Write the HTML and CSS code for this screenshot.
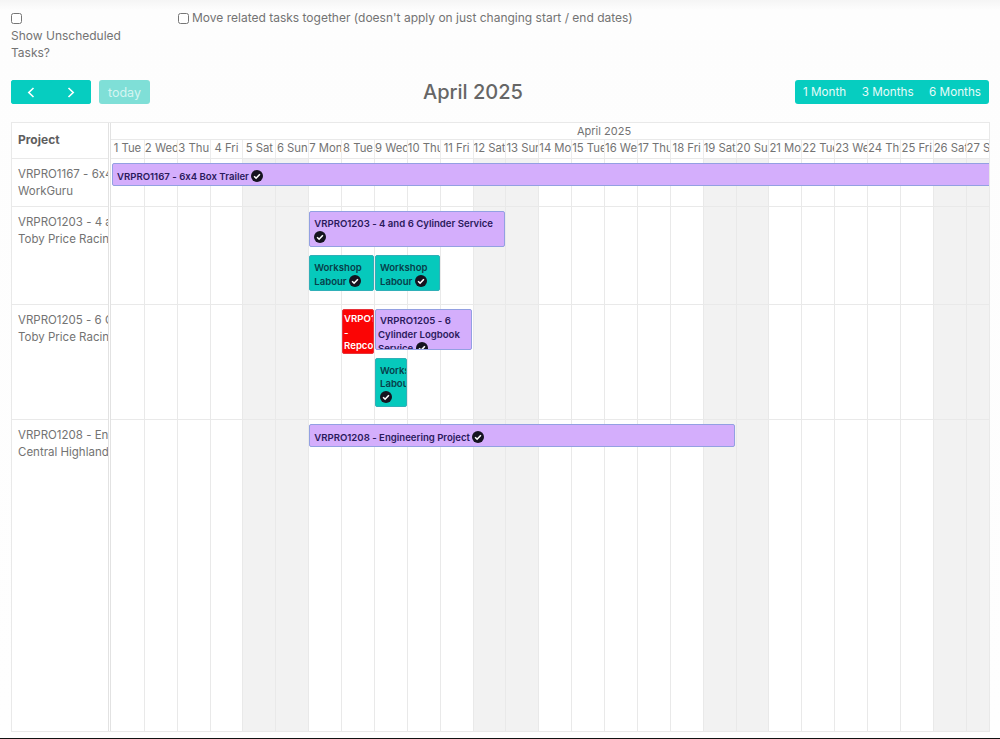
FILE: index.html
```html
<!DOCTYPE html>
<html lang="en">
<head>
<meta charset="utf-8">
<title>Project Schedule</title>
<link rel="stylesheet" href="styles.css">
</head>
<body>
<svg class="defs" width="0" height="0" aria-hidden="true">
  <symbol id="ok" viewBox="0 0 24 24">
    <circle cx="12" cy="12" r="12" fill="#15131f"/>
    <path d="M6.2 12.4l4 4 7.6-8" fill="none" stroke="#fff" stroke-width="3.2"/>
  </symbol>
</svg>
<main class="page">
  <section class="options">
    <div class="opt-unscheduled">
      <input type="checkbox" class="check">
      <label>Show Unscheduled Tasks?</label>
    </div>
    <div class="opt-move">
      <input type="checkbox" class="check">
      <label>Move related tasks together (doesn't apply on just changing start / end dates)</label>
    </div>
  </section>

  <section class="toolbar">
    <div class="tb-left">
      <div class="btn-group nav">
        <button class="btn">
          <svg width="8" height="11" viewBox="0 0 8 11"><path d="M6.5 1L1.8 5.5l4.7 4.5" fill="none" stroke="#fff" stroke-width="1.6"/></svg>
        </button>
        <button class="btn">
          <svg width="8" height="11" viewBox="0 0 8 11"><path d="M1.5 1l4.7 4.5L1.5 10" fill="none" stroke="#fff" stroke-width="1.6"/></svg>
        </button>
      </div>
      <button class="btn today">today</button>
    </div>
    <h1 class="title">April 2025</h1>
    <div class="btn-group views">
      <button class="btn">1 Month</button>
      <button class="btn">3 Months</button>
      <button class="btn">6 Months</button>
    </div>
  </section>

  <section class="sched">
    <div class="side">
      <div class="side-head">Project</div>
      <div class="side-row r1"><div>VRPRO1167 - 6x4 Box Trailer</div><div>WorkGuru</div></div>
      <div class="side-row r2"><div>VRPRO1203 - 4 and 6 Cylinder Service</div><div>Toby Price Racing</div></div>
      <div class="side-row r3"><div>VRPRO1205 - 6 Cylinder Logbook Service</div><div>Toby Price Racing</div></div>
      <div class="side-row r4"><div>VRPRO1208 - Engineering Project</div><div>Central Highlands</div></div>
    </div>
    <div class="scroller">
      <div class="timeline">
        <div class="month">April 2025</div>
        <div class="days">
          <div>1 Tue</div><div>2 Wed</div><div>3 Thu</div><div>4 Fri</div><div>5 Sat</div><div>6 Sun</div><div>7 Mon</div><div>8 Tue</div><div>9 Wed</div><div>10 Thu</div>
          <div>11 Fri</div><div>12 Sat</div><div>13 Sun</div><div>14 Mon</div><div>15 Tue</div><div>16 Wed</div><div>17 Thu</div><div>18 Fri</div><div>19 Sat</div><div>20 Sun</div>
          <div>21 Mon</div><div>22 Tue</div><div>23 Wed</div><div>24 Thu</div><div>25 Fri</div><div>26 Sat</div><div>27 Sun</div><div>28 Mon</div><div>29 Tue</div><div>30 Wed</div>
        </div>
        <div class="body">
          <div class="columns">
            <i></i><i></i><i></i><i></i><i class="we"></i><i class="we"></i><i></i><i></i><i></i><i></i>
            <i></i><i class="we"></i><i class="we"></i><i></i><i></i><i></i><i></i><i></i><i class="we"></i><i class="we"></i>
            <i></i><i></i><i></i><i></i><i></i><i class="we"></i><i class="we"></i><i></i><i></i><i></i>
          </div>
          <div class="lane r1">
            <div class="ev purple s1-30 h23">VRPRO1167 - 6x4 Box Trailer <svg class="ok"><use href="#ok"/></svg></div>
          </div>
          <div class="lane r2">
            <div class="ev purple s7-12 h36">VRPRO1203 - 4 and 6 Cylinder Service <svg class="ok"><use href="#ok"/></svg></div>
            <div class="ev teal s7-8 h36 row2">Workshop Labour <svg class="ok"><use href="#ok"/></svg></div>
            <div class="ev teal s9-10 h36 row2">Workshop Labour <svg class="ok"><use href="#ok"/></svg></div>
          </div>
          <div class="lane r3">
            <div class="ev red s8 h45">VRPO1205 - Repco Parts</div>
            <div class="ev purple s9-11 h41 indent">VRPRO1205 - 6 Cylinder Logbook Service <svg class="ok"><use href="#ok"/></svg></div>
            <div class="ev teal s9 h49 row2">Workshop Labour <svg class="ok"><use href="#ok"/></svg></div>
          </div>
          <div class="lane r4">
            <div class="ev purple s7-19 h23">VRPRO1208 - Engineering Project <svg class="ok"><use href="#ok"/></svg></div>
          </div>
        </div>
      </div>
    </div>
  </section>
</main>
<div class="edge"></div>
</body>
</html>
```
FILE: styles.css
```css
* { box-sizing: border-box; }
html, body { margin: 0; height: 739px; overflow: hidden; }
body {
  background: linear-gradient(#f5f5f5 0, #fdfdfd 10px, #fefefe 100%);
  font-family: Inter, "Liberation Sans", sans-serif;
  font-feature-settings: "calt" 0;
  font-size: 12px;
  color: #737373;
  display: flex;
  flex-direction: column;
}
.defs { position: absolute; }
.page { flex: 1; padding: 13px 10px 0 11px; display: flex; flex-direction: column; min-height: 0; }
.options { display: flex; height: 67px; }
.check { width: 11px; height: 11px; margin: 0; display: block; flex: none; }
.opt-unscheduled { width: 167px; }
.opt-unscheduled label { display: block; width: 125px; margin-top: 3px; line-height: 17px; }
.opt-move { display: flex; gap: 3px; line-height: 12px; }
.opt-move label { margin-top: -1px; }
.toolbar { display: flex; align-items: center; justify-content: space-between; height: 24px; position: relative; }
.tb-left { display: flex; gap: 8px; width: 139px; }
.title { margin: 0 0 0 273px; font-size: 20px; font-weight: 500; color: #666; line-height: 24px; flex: 1; }
.btn-group { display: flex; background: #06cdc0; border-radius: 3px; height: 24px; }
.btn {
  border: 0; background: #06cdc0; color: #e6fbf9; font: inherit; font-size: 11.7px;
  height: 24px; padding: 0; border-radius: 3px;
}
.nav { width: 80px; }
.nav .btn { width: 40px; display: flex; align-items: center; justify-content: center; }
.today { width: 51px; background: #7fdfd7; color: #d5f5f2; font-size: 12.5px; }
.views { width: 194px; margin-right: 1px; padding: 0 8px; justify-content: space-between; }
.sched {
  margin-top: 18px; height: 610px; display: flex; width: 979px;
  border: 1px solid #e9e9e9; background: #fff;
}
.side { width: 99px; flex: none; border-right: 3px double #e2e2e2; }
.side-head {
  height: 36px; padding: 0 0 2px 6px; display: flex; align-items: center;
  font-weight: 700; color: #5e5e5e; font-size: 12px; border-bottom: 1px solid #e9e9e9;
}
.side-row {
  padding: 6.5px 0 0 6px; line-height: 17px; white-space: nowrap; overflow: hidden;
  border-bottom: 1px solid #e9e9e9; font-size: 11.5px;
}
.side-row.r4 { border-bottom: 0; }
.r1 { height: 48px; }
.r2 { height: 98px; }
.r3 { height: 115px; }
.r4 { height: 312px; }
.scroller { flex: 1; overflow: hidden; min-width: 0; }
.timeline { width: 986.1px; }
.month { height: 17px; text-align: center; line-height: 16px; font-size: 11px; border-bottom: 1px solid #e9e9e9; }
.days { display: grid; grid-template-columns: repeat(30, 1fr); height: 19px; border-bottom: 1px solid #e9e9e9; }
.days div {
  text-align: center; white-space: nowrap; overflow: hidden; line-height: 17px; font-size: 11.3px;
  border-left: 1px solid #ececec; min-width: 0;
}
.days div:first-child { border-left: 0; }
.body { position: relative; height: 573px; }
.columns { position: absolute; inset: 0; display: grid; grid-template-columns: repeat(30, 1fr); }
.columns i { border-left: 1px solid #e9e9e9; }
.columns i:first-child { border-left: 0; }
.columns .we { background: #f2f2f2; }
.lane {
  position: relative; display: grid; grid-template-columns: repeat(30, 1fr);
  align-content: start; align-items: start; padding-top: 4px;
  border-bottom: 1px solid #e9e9e9;
}
.lane.r2 { row-gap: 8px; }
.lane.r3 { row-gap: 4px; }
.lane.r4 { border-bottom: 0; }
.ev {
  margin-left: 1px; border-radius: 2px; border: 1px solid; overflow: hidden;
  font-size: 9.6px; font-weight: 600; line-height: 14px; padding: 4.5px 3px 0 4px;
}
.purple { background: #d4aefc; border-color: #93a0e2; color: #2b1a5c; }
.teal { background: #06c9bc; border-color: #2fb0b8; color: #06404a; }
.red { background: #fb0505; border-color: #e8333a; color: #fff; padding: 2px 0 0 1px; line-height: 13.5px; }
.indent { padding: 3.5px 3px 0 2px; text-indent: 2px; }
.h23 { height: 23px; padding-top: 5.5px; }
.h36 { height: 36px; }
.h41 { height: 41px; }
.h45 { height: 45px; }
.h49 { height: 49px; line-height: 13.5px; }
.s1-30 { grid-column: 1 / 31; margin-right: -2px; }
.s7-12 { grid-column: 7 / 13; }
.s7-8 { grid-column: 7 / 9; }
.s9-10 { grid-column: 9 / 11; }
.s8 { grid-column: 8 / 9; }
.s9-11 { grid-column: 9 / 12; margin-right: 1px; }
.s9 { grid-column: 9 / 10; }
.s7-19 { grid-column: 7 / 20; margin-right: 1px; }
.row2 { grid-row: 2; }
.ok { width: 12px; height: 12px; vertical-align: -2px; }
.edge { height: 1px; background: #111; flex: none; }
```
